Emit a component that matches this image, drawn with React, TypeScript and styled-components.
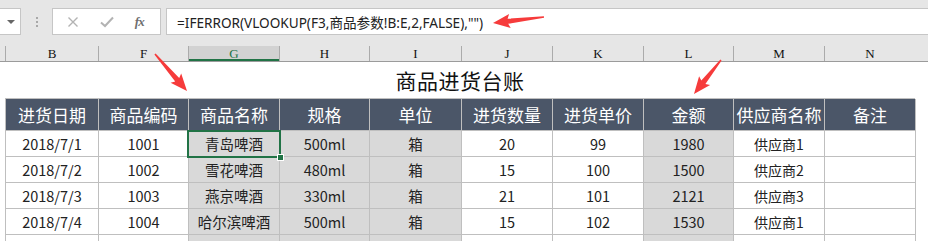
import React from "react";
import styled, { createGlobalStyle } from "styled-components";

const Global = createGlobalStyle`
  html, body { margin: 0; padding: 0; background: #fff; overflow: hidden; }
  body { width: 928px; height: 241px; font-family: "Noto Sans CJK SC", "Noto Sans", sans-serif; }
  *, *::before, *::after { box-sizing: border-box; }
`;

const COLS = [93, 90, 91, 90, 92, 91, 91, 90, 91, 91];
const template = COLS.map((w) => `${w}px`).join(" ");

const Page = styled.div`
  position: relative;
  width: 928px;
  height: 241px;
  overflow: hidden;
`;

const FormulaBar = styled.div`
  display: flex;
  align-items: stretch;
  height: 46px;
  padding: 8px 0 11px 0;
  background: #e6e6e6;
`;

const NameBox = styled.div`
  width: 21px;
  background: #fff;
  border: 1px solid #c6c6c6;
  border-left: none;
  display: flex;
  align-items: center;
  justify-content: center;
`;

const Caret = styled.span`
  width: 0;
  height: 0;
  border-left: 4px solid transparent;
  border-right: 4px solid transparent;
  border-top: 4px solid #666;
  margin-left: 2px;
`;

const Grip = styled.div`
  width: 31px;
  display: flex;
  flex-direction: column;
  align-items: center;
  justify-content: center;
  gap: 2px;
  & > i {
    width: 2px;
    height: 2px;
    background: #a8a8a8;
  }
`;

const FxBox = styled.div`
  width: 109px;
  background: #fff;
  border: 1px solid #c6c6c6;
  display: flex;
  align-items: center;
  justify-content: space-around;
  padding: 0 6px 0 4px;
  margin-right: 5px;
`;

const FxLabel = styled.span`
  font-family: "Liberation Serif", serif;
  font-style: italic;
  font-weight: bold;
  font-size: 13px;
  color: #6f6f6f;
  letter-spacing: -1px;
`;

const FormulaInput = styled.div`
  flex: 1;
  background: #fff;
  border: 1px solid #c6c6c6;
  border-right: none;
  display: flex;
  align-items: center;
  padding-left: 10px;
  font-family: "Noto Sans", "Noto Sans CJK SC", sans-serif;
  font-size: 13.6px;
  color: #222;
  white-space: nowrap;
`;

const ColumnBar = styled.div`
  display: grid;
  grid-template-columns: ${template};
  height: 16px;
  padding-left: 5px;
  background: #e6e6e6;
  border-bottom: 1px solid #9b9b9b;
`;

const ColLetter = styled.div<{ $active?: boolean }>`
  display: flex;
  align-items: center;
  justify-content: center;
  font-family: "Liberation Serif", serif;
  font-size: 13px;
  line-height: 1;
  color: ${(p) => (p.$active ? "#217346" : "#111")};
  background: ${(p) => (p.$active ? "#d2d2d2" : "transparent")};
  border-left: 1px solid #ababab;
  box-shadow: ${(p) => (p.$active ? "inset 0 -2px 0 #217346" : "none")};
`;

const Sheet = styled.div`
  padding-left: 5px;
`;

const Title = styled.div`
  width: 910px;
  height: 36px;
  display: flex;
  align-items: center;
  justify-content: center;
  font-size: 21px;
  color: #111;
  letter-spacing: 0.5px;
`;

const Table = styled.div`
  display: grid;
  grid-template-columns: ${template};
  grid-template-rows: 32px;
  grid-auto-rows: 26px;
  border-top: 1px solid #bfbfbf;
  border-left: 1px solid #bfbfbf;
  width: 910px;
`;

const HeadCell = styled.div`
  display: flex;
  align-items: center;
  justify-content: center;
  background: #4b5668;
  color: #fff;
  font-size: 17px;
  border-right: 1px solid #bfbfbf;
  border-bottom: 1px solid #bfbfbf;
  white-space: nowrap;
  overflow: hidden;
`;

const Cell = styled.div<{ $shade?: boolean; $selected?: boolean; $small?: boolean }>`
  position: relative;
  display: flex;
  align-items: center;
  justify-content: center;
  background: ${(p) => (p.$shade ? "#d9d9d9" : "#fff")};
  color: #222;
  font-size: ${(p) => (p.$small ? "14px" : "14.5px")};
  border-right: 1px solid #bfbfbf;
  border-bottom: 1px solid #bfbfbf;
  white-space: nowrap;
  ${(p) =>
    p.$selected &&
    `
    &::before {
      content: "";
      position: absolute;
      left: -2px; top: -1px; right: -2px; bottom: -2px;
      border: 2px solid #217346;
      z-index: 2;
    }
    &::after {
      content: "";
      position: absolute;
      right: -5px; bottom: -5px;
      width: 7px; height: 7px;
      background: #217346;
      border: 1px solid #fff;
      z-index: 3;
    }
  `}
`;

const Overlay = styled.svg`
  position: absolute;
  left: 0;
  top: 0;
  pointer-events: none;
`;

const LETTERS = ["B", "F", "G", "H", "I", "J", "K", "L", "M", "N"];
const HEADS = ["进货日期", "商品编码", "商品名称", "规格", "单位", "进货数量", "进货单价", "金额", "供应商名称", "备注"];
const SHADED = [2, 3, 4, 7];

const ROWS: string[][] = [
  ["2018/7/1", "1001", "青岛啤酒", "500ml", "箱", "20", "99", "1980", "供应商1", ""],
  ["2018/7/2", "1002", "雪花啤酒", "480ml", "箱", "15", "100", "1500", "供应商2", ""],
  ["2018/7/3", "1003", "燕京啤酒", "330ml", "箱", "21", "101", "2121", "供应商3", ""],
  ["2018/7/4", "1004", "哈尔滨啤酒", "500ml", "箱", "15", "102", "1530", "供应商1", ""],
  ["", "", "", "", "", "", "", "", "", ""],
];

type Pt = [number, number];

// Tapered callout arrow drawn from a tail point to a tip point
function arrowPoints(tail: Pt, tip: Pt, head = 15, half = 7, neck = 2.6): string {
  const dx = tip[0] - tail[0];
  const dy = tip[1] - tail[1];
  const len = Math.hypot(dx, dy);
  const ux = dx / len;
  const uy = dy / len;
  const nx = -uy;
  const ny = ux;
  const at = (s: number, t: number) => `${(tail[0] + ux * s + nx * t).toFixed(1)},${(tail[1] + uy * s + ny * t).toFixed(1)}`;
  const b = len - head;
  return [at(0, -0.8), at(b, -neck), at(b - 2, -half), at(len, 0), at(b - 2, half), at(b, neck), at(0, 0.8)].join(" ");
}

const ARROWS: [Pt, Pt][] = [
  [[544, 17], [493, 23]],
  [[155, 54], [187, 91]],
  [[721, 60], [694, 94]],
];

export default function App() {
  return (
    <Page>
      <Global />
      <FormulaBar>
        <NameBox>
          <Caret />
        </NameBox>
        <Grip>
          <i />
          <i />
          <i />
        </Grip>
        <FxBox>
          <svg width="12" height="12" viewBox="0 0 12 12">
            <path d="M1.5 1.5 L10.5 10.5 M10.5 1.5 L1.5 10.5" stroke="#b3b3b3" strokeWidth="1.4" fill="none" />
          </svg>
          <svg width="14" height="12" viewBox="0 0 14 12">
            <path d="M1 6.5 L5 10 L13 1.5" stroke="#b3b3b3" strokeWidth="2" fill="none" />
          </svg>
          <FxLabel>fx</FxLabel>
        </FxBox>
        <FormulaInput>=IFERROR(VLOOKUP(F3,商品参数!B:E,2,FALSE),"")</FormulaInput>
      </FormulaBar>

      <ColumnBar>
        {LETTERS.map((l) => (
          <ColLetter key={l} $active={l === "G"}>
            {l}
          </ColLetter>
        ))}
      </ColumnBar>

      <Sheet>
        <Title>商品进货台账</Title>
        <Table>
          {HEADS.map((h) => (
            <HeadCell key={h}>{h}</HeadCell>
          ))}
          {ROWS.map((row, r) =>
            row.map((v, c) => (
              <Cell
                key={`${r}-${c}`}
                $shade={SHADED.includes(c)}
                $selected={r === 0 && c === 2}
                $small={c === 8}
              >
                {v}
              </Cell>
            ))
          )}
        </Table>
      </Sheet>

      <Overlay width="928" height="241" viewBox="0 0 928 241">
        {ARROWS.map(([a, b], i) => (
          <polygon key={i} points={arrowPoints(a, b)} fill="#f63b3b" />
        ))}
      </Overlay>
    </Page>
  );
}
